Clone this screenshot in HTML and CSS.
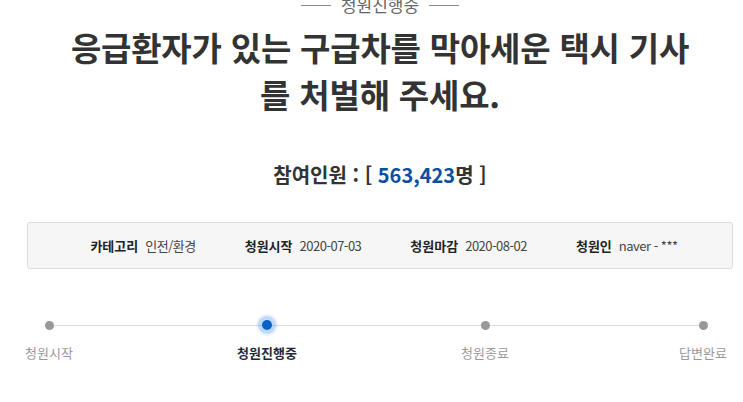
FILE: index.html
```html
<!DOCTYPE html>
<html lang="ko">
<head>
<meta charset="utf-8">
<link rel="stylesheet" href="styles.css">
</head>
<body>
<div class="page">
  <div class="status"><span class="rule"></span><span class="status-text">청원진행중</span><span class="rule"></span></div>
  <h1 class="title">응급환자가 있는 구급차를 막아세운 택시 기사<br>를 처벌해 주세요.</h1>
  <p class="count">참여인원 : [ <span class="num">563,423</span>명 ]</p>
  <div class="info">
    <div class="item"><b>카테고리</b><span>인전/환경</span></div>
    <div class="item"><b>청원시작</b><span>2020-07-03</span></div>
    <div class="item"><b>청원마감</b><span>2020-08-02</span></div>
    <div class="item"><b>청원인</b><span>naver - ***</span></div>
  </div>
  <div class="progress">
    <div class="line"></div>
    <div class="step"><i class="dot"></i><span class="label">청원시작</span></div>
    <div class="step active"><i class="dot"></i><span class="label">청원진행중</span></div>
    <div class="step"><i class="dot"></i><span class="label">청원종료</span></div>
    <div class="step"><i class="dot"></i><span class="label">답변완료</span></div>
  </div>
</div>
</body>
</html>
```

FILE: styles.css
```css
* { box-sizing: border-box; }
html, body { margin: 0; padding: 0; background: #fff; }
body {
  font-family: "Noto Sans CJK KR", "Noto Sans", sans-serif;
  color: #333;
  overflow: hidden;
}
.page {
  width: 706px;
  margin-left: 27px;
}
.status {
  display: flex;
  justify-content: center;
  align-items: center;
  gap: 10px;
  height: 20px;
  margin-top: -5px;
}
.status-text {
  font-size: 17px;
  color: #666;
  line-height: 20px;
}
.rule {
  display: block;
  width: 30px;
  height: 1px;
  background: #888;
}
.title {
  margin: 9px 0 0;
  text-align: center;
  font-size: 33px;
  font-weight: 700;
  line-height: 47px;
  color: #333;
  letter-spacing: -0.2px;
}
.count {
  margin: 43px 0 0;
  text-align: center;
  font-size: 20px;
  font-weight: 700;
  line-height: 28px;
  color: #333;
}
.num { color: #0b4ea2; }
.info {
  margin-top: 33px;
  height: 47px;
  background: #f6f6f6;
  border: 1px solid #dedede;
  border-radius: 3px;
  display: flex;
  justify-content: center;
  align-items: center;
  gap: 49px;
  font-size: 13px;
  padding-left: 8px;
}
.item { display: flex; gap: 7px; align-items: center; }
.item b { font-weight: 700; color: #222; }
.item span { color: #444; letter-spacing: -0.5px; }
.progress {
  position: relative;
  display: flex;
  justify-content: space-between;
  margin-top: 51px;
  padding: 0 30px 0 22px;
}
.line {
  position: absolute;
  left: 22px;
  right: 30px;
  top: 5px;
  height: 1px;
  background: #dcdcdc;
}
.step {
  position: relative;
  width: 0;
  display: flex;
  flex-direction: column;
  align-items: center;
}
.dot {
  display: block;
  width: 9px;
  height: 9px;
  border-radius: 50%;
  background: #999;
  margin-top: 1px;
}
.active .dot {
  width: 10px;
  height: 10px;
  margin-top: 0;
  background: #0a62c9;
  box-shadow: 0 0 0 4px rgba(60, 140, 240, 0.25), 0 0 0 6px rgba(60, 140, 240, 0.1);
}
.label {
  white-space: nowrap;
  font-size: 13px;
  color: #999;
  margin-top: 14px;
  line-height: 18px;
}
.active .label { color: #1e2a3a; font-weight: 700; }
```
